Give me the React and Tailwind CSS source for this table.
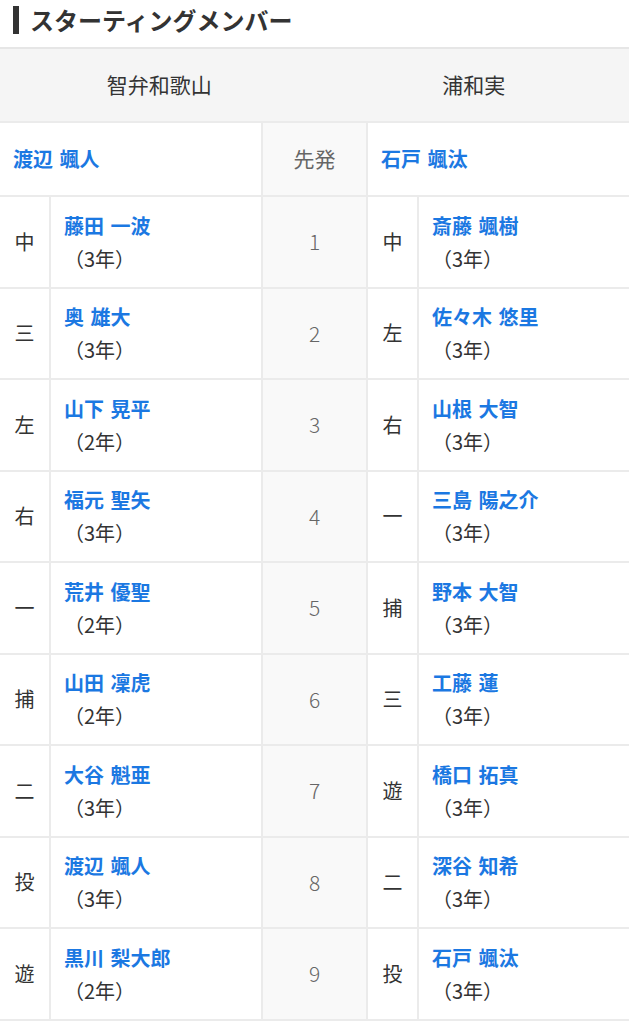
import React from 'react';

const home = [
  { pos: '中', name: '藤田 一波', grade: '3' },
  { pos: '三', name: '奥 雄大', grade: '3' },
  { pos: '左', name: '山下 晃平', grade: '2' },
  { pos: '右', name: '福元 聖矢', grade: '3' },
  { pos: '一', name: '荒井 優聖', grade: '2' },
  { pos: '捕', name: '山田 凜虎', grade: '2' },
  { pos: '二', name: '大谷 魁亜', grade: '3' },
  { pos: '投', name: '渡辺 颯人', grade: '3' },
  { pos: '遊', name: '黒川 梨大郎', grade: '2' },
];

const away = [
  { pos: '中', name: '斎藤 颯樹', grade: '3' },
  { pos: '左', name: '佐々木 悠里', grade: '3' },
  { pos: '右', name: '山根 大智', grade: '3' },
  { pos: '一', name: '三島 陽之介', grade: '3' },
  { pos: '捕', name: '野本 大智', grade: '3' },
  { pos: '三', name: '工藤 蓮', grade: '3' },
  { pos: '遊', name: '橋口 拓真', grade: '3' },
  { pos: '二', name: '深谷 知希', grade: '3' },
  { pos: '投', name: '石戸 颯汰', grade: '3' },
];

const Player = ({ p }) => (
  <>
    <div className="bg-white h-[89.5px] flex items-center justify-center text-[20px] text-[#333]">
      {p.pos}
    </div>
    <div className="bg-white h-[89.5px] flex flex-col justify-center pl-[13px] leading-[33px]">
      <span className="text-[20px] font-bold text-[#1b78e2] [word-spacing:2px]">{p.name}</span>
      <span className="text-[20px] text-[#333]">（{p.grade}年）</span>
    </div>
  </>
);

const App = () => {
  return (
    <div className="w-[629px] min-h-screen bg-white font-['Noto_Sans_CJK_JP','Noto_Sans',sans-serif]">
      <div className="flex items-center h-[47px] pl-[13px] pb-[8px]">
        <div className="w-[6px] h-[28px] bg-[#333]" />
        <h2 className="ml-[11px] text-[24px] font-bold text-[#333] leading-none">
          スターティングメンバー
        </h2>
      </div>

      <div className="flex h-[74px] bg-[#f5f5f5] border-t-2 border-[#e6e6e6] text-[21px] text-[#333]">
        <div className="flex-1 flex items-center justify-center pl-[4px]">智弁和歌山</div>
        <div className="flex-1 flex items-center justify-center pl-[4px]">浦和実</div>
      </div>

      <div className="grid grid-cols-[49px_210px_103px_49px_210px] gap-[2px] bg-[#ebebeb] py-[2px]">
        <div className="col-span-2 bg-white h-[72px] flex items-center pl-[13px] text-[20px] font-bold text-[#1b78e2] [word-spacing:2px]">
          渡辺 颯人
        </div>
        <div className="bg-[#f9f9f9] h-[72px] flex items-center justify-center text-[21px] text-[#666]">
          先発
        </div>
        <div className="col-span-2 bg-white h-[72px] flex items-center pl-[13px] text-[20px] font-bold text-[#1b78e2] [word-spacing:2px]">
          石戸 颯汰
        </div>

        {home.map((p, i) => (
          <React.Fragment key={i}>
            <Player p={p} />
            <div className="bg-[#f9f9f9] h-[89.5px] flex items-center justify-center text-[21px] font-light text-[#666]">
              {i + 1}
            </div>
            <Player p={away[i]} />
          </React.Fragment>
        ))}
      </div>
    </div>
  );
};

export default App;
